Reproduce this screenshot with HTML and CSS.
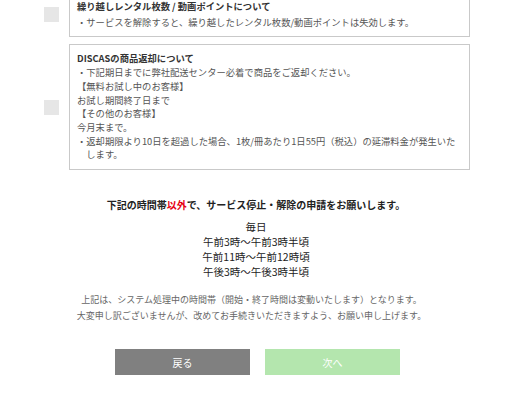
FILE: index.html
```html
<!DOCTYPE html>
<html lang="ja">
<head>
    <meta charset="UTF-8">
    <meta name="viewport" content="width=device-width, initial-scale=1.0">
    <title>サービス停止・解除</title>
    <link rel="stylesheet" href="styles.css">
</head>
<body>
    <div class="container">
        <div class="notice-list">
            <div class="notice-row">
                <span class="check"></span>
                <div class="notice">
                    <div class="notice-title spaced">繰り越しレンタル枚数 / 動画ポイントについて</div>
                    <div class="item">・サービスを解除すると、繰り越したレンタル枚数/動画ポイントは失効します。</div>
                </div>
            </div>

            <div class="notice-row">
                <span class="check"></span>
                <div class="notice">
                    <div class="notice-title">DISCASの商品返却について</div>
                    <div class="item">・下記期日までに弊社配送センター必着で商品をご返却ください。</div>
                    <div>【無料お試し中のお客様】</div>
                    <div>お試し期間終了日まで</div>
                    <div>【その他のお客様】</div>
                    <div>今月末まで。</div>
                    <div class="item">・返却期限より10日を超過した場合、1枚/冊あたり1日55円（税込）の延滞料金が発生いた<br>します。</div>
                </div>
            </div>
        </div>

        <div class="schedule">
            <p class="schedule-lead">下記の時間帯<span class="accent">以外</span>で、サービス停止・解除の申請をお願いします。</p>
            <ul class="times">
                <li>毎日</li>
                <li>午前3時〜午前3時半頃</li>
                <li>午前11時〜午前12時頃</li>
                <li>午後3時〜午後3時半頃</li>
            </ul>
            <p class="schedule-note">上記は、システム処理中の時間帯（開始・終了時間は変動いたします）となります。<br>大変申し訳ございませんが、改めてお手続きいただきますよう、お願い申し上げます。</p>
        </div>

        <div class="actions">
            <button type="button" class="btn btn-back">戻る</button>
            <button type="button" class="btn btn-next" disabled>次へ</button>
        </div>
    </div>
</body>
</html>
```

FILE: styles.css
```css
* {
    margin: 0;
    padding: 0;
    box-sizing: border-box;
}

body {
    font-family: "Noto Sans CJK JP", "Noto Sans", sans-serif;
    color: #333;
    background: #fff;
    width: 512px;
    height: 412px;
    overflow: hidden;
}

.container {
    margin-top: -8px;
}

.notice-list {
    padding: 0 42px 0 44px;
}

.notice-row {
    display: flex;
    align-items: center;
    margin-bottom: 7px;
}

.check {
    flex: none;
    width: 15px;
    height: 15px;
    background: #e6e6e6;
    margin-right: 10px;
}

.notice {
    flex: 1;
    border: 1px solid #c9c9c9;
    padding: 7px;
    font-size: 9.3px;
    line-height: 13.7px;
    color: #555;
}

.notice-title {
    font-weight: bold;
    color: #333;
}

.notice-title.spaced {
    margin-bottom: 2px;
}

.item {
    white-space: nowrap;
    padding-left: 1em;
    text-indent: -1em;
}

.schedule {
    text-align: center;
    margin-top: 27px;
}

.schedule-lead {
    font-size: 10px;
    line-height: 15px;
    font-weight: bold;
    color: #222;
}

.accent {
    color: #e60012;
}

.times {
    list-style: none;
    margin-top: 7px;
    font-size: 10.5px;
    line-height: 15px;
    color: #222;
}

.schedule-note {
    margin-top: 13px;
    padding-right: 9px;
    font-size: 9px;
    line-height: 16px;
    color: #666;
}

.actions {
    display: flex;
    justify-content: center;
    gap: 15px;
    margin-top: 25px;
    padding-left: 3px;
}

.btn {
    width: 135px;
    height: 26px;
    border: none;
    font-family: inherit;
    font-size: 10px;
    color: #fff;
    cursor: pointer;
}

.btn-back {
    background: #808080;
}

.btn-next {
    background: #b4e6ae;
    cursor: default;
}
```
